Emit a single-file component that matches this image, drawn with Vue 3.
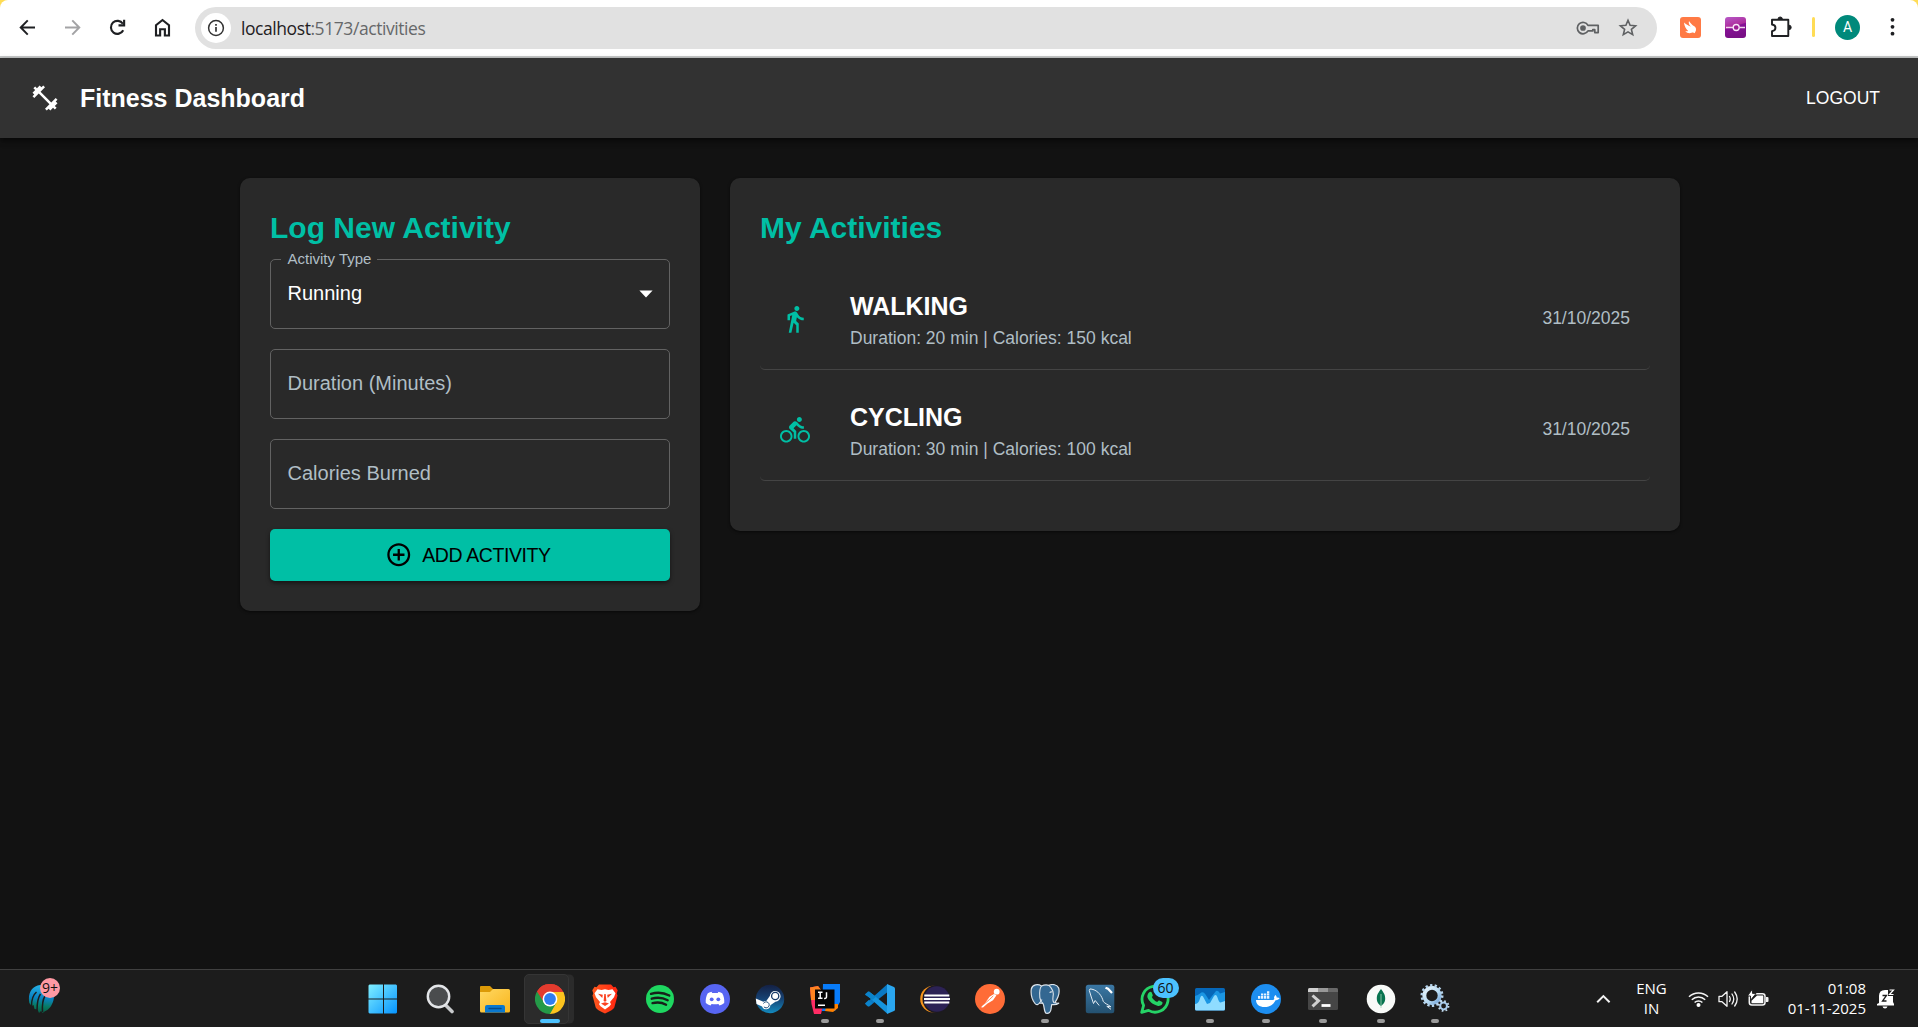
<script setup>
const activities = [
  {
    type: 'WALKING',
    detail: 'Duration: 20 min | Calories: 150 kcal',
    date: '31/10/2025',
    icon: 'M13.5 5.5c1.1 0 2-.9 2-2s-.9-2-2-2-2 .9-2 2 .9 2 2 2zM9.8 8.9 7 23h2.1l1.8-8 2.1 2v6h2v-7.5l-2.1-2 .6-3C14.8 12 16.8 13 19 13v-2c-1.9 0-3.5-1-4.3-2.4l-1-1.6c-.4-.6-1-1-1.7-1-.3 0-.5.1-.8.1L6 8.3V13h2V9.6l1.8-.7'
  },
  {
    type: 'CYCLING',
    detail: 'Duration: 30 min | Calories: 100 kcal',
    date: '31/10/2025',
    icon: 'M15.5 5.5c1.1 0 2-.9 2-2s-.9-2-2-2-2 .9-2 2 .9 2 2 2zM5 12c-2.8 0-5 2.2-5 5s2.2 5 5 5 5-2.2 5-5-2.2-5-5-5zm0 8.5c-1.9 0-3.5-1.6-3.5-3.5s1.6-3.5 3.5-3.5 3.5 1.6 3.5 3.5-1.6 3.5-3.5 3.5zm5.8-10 2.4-2.4.8.8c1.3 1.3 3 2.1 5.1 2.1V9c-1.5 0-2.7-.6-3.6-1.5l-1.9-1.9c-.5-.4-1-.6-1.6-.6s-1.1.2-1.4.6L7.8 8.4c-.4.4-.6.9-.6 1.4 0 .6.2 1.1.6 1.4L11 14v5h2v-6.2l-2.2-2.3zM19 12c-2.8 0-5 2.2-5 5s2.2 5 5 5 5-2.2 5-5-2.2-5-5-5zm0 8.5c-1.9 0-3.5-1.6-3.5-3.5s1.6-3.5 3.5-3.5 3.5 1.6 3.5 3.5-1.6 3.5-3.5 3.5z'
  }
]
</script>

<template>
  <div class="screen">
    <!-- browser toolbar -->
    <div class="chrome-wrap">
      <div class="toolbar">
        <div class="nav">
          <svg width="25" height="25" viewBox="0 0 20 20" fill="none" stroke="#1f2023" stroke-width="1.6"><path d="M16 10H4.8M10.2 4.3 4.6 10l5.6 5.7" /></svg>
          <svg width="25" height="25" viewBox="0 0 20 20" fill="none" stroke="#a3a3a5" stroke-width="1.6"><path d="M4 10h11.2M9.8 4.3l5.6 5.7-5.6 5.7" /></svg>
          <svg width="25" height="25" viewBox="0 0 20 20" fill="none" stroke="#1f2023" stroke-width="1.7"><path d="M14.6 12.2A5.2 5.2 0 1 1 14.3 7" /><path d="M15.3 3.8v4.5h-4.5" /></svg>
          <svg width="25" height="25" viewBox="0 0 20 20" fill="none" stroke="#1f2023" stroke-width="1.7"><path d="M4.8 16.4V8.2L10 4l5.2 4.2v8.2h-3.3v-5H8.1v5z" /></svg>
        </div>
        <div class="omnibox">
          <span class="site-info">
            <svg width="18" height="18" viewBox="0 0 18 18"><circle cx="9" cy="9" r="7.4" fill="none" stroke="#333" stroke-width="1.5" /><path d="M9 8v4.8M9 5v1.7" stroke="#333" stroke-width="1.7" /></svg>
          </span>
          <span class="url"><b>localhost</b>:5173/activities</span>
          <svg class="key" width="24" height="16" viewBox="0 0 24 16" fill="none" stroke="#5f6163" stroke-width="1.7"><path d="M12 5.3h10.2v7.3h-3.4V9.7h-2v1.2H12A5.7 5.7 0 1 1 12 5.3z" stroke-linejoin="round" /><circle cx="7" cy="8" r="2" fill="#5f6163" /></svg>
          <svg class="star" width="20" height="20" viewBox="0 0 20 20" fill="none" stroke="#5f6163" stroke-width="1.6"><path d="m10 2.3 2.1 5 5.5.5-4.2 3.6 1.3 5.3L10 13.9l-4.7 2.8 1.3-5.3-4.2-3.6 5.5-.5z" /></svg>
        </div>
        <div class="extensions">
          <svg width="21" height="21" viewBox="0 0 21 21"><rect width="21" height="21" rx="3" fill="#ff7a45" /><path d="M4 5.500c2.500 2.300 4.700 3.300 7 4C9 8 8.300 6 9 3.900c1.300 2.500 3.200 3.500 4.400 4.900 2 1 2.800 2.300 2.600 3.800.1 1.500-.6 2.200-1.400 3.700-.8-.9-1.900-1-3-.5-2.500.9-4.600.2-6.400-1.600 1.300.2 2.200.1 3-.3C5.800 12 4.300 9 4 5.500z" fill="#fff" /></svg>
          <svg width="21" height="21" viewBox="0 0 21 21"><defs><linearGradient id="ext" x1="0" y1="0" x2=".3" y2="1"><stop stop-color="#b75ac8" /><stop offset=".5" stop-color="#ad2c9c" /><stop offset=".55" stop-color="#861196" /><stop offset="1" stop-color="#790f86" /></linearGradient></defs><rect width="21" height="21" rx="3" fill="url(#ext)" /><path d="M1 10.500h7M14.500 10.500h5.500" stroke="#f4d5ee" stroke-width="1.300" /><circle cx="11.200" cy="10.500" r="3" fill="#9c1b93" stroke="#f9e6f7" stroke-width="1.300" /></svg>
          <svg width="22" height="22" viewBox="0 0 22 22" fill="none" stroke="#1f2023" stroke-width="1.900"><path d="M2 3.700h16.300v16.300H2v-4.800c4.600-.5 4.600-6.200 0-6.700z" stroke-linejoin="round" /><path d="M8 3.200a2.200 2.200 0 0 1 4.400 0M19 9.200a2.200 2.200 0 0 1 0 4.400" fill="#1f2023" stroke-width="1" /></svg>
        </div>
        <span class="bar"></span>
        <span class="avatar">A</span>
        <svg class="dots" width="5" height="20" viewBox="0 0 5 20" fill="#1f2023"><circle cx="2.500" cy="2.800" r="1.900" /><circle cx="2.500" cy="9.800" r="1.900" /><circle cx="2.500" cy="16.700" r="1.900" /></svg>
      </div>
    </div>

    <header class="appbar">
      <svg width="30" height="30" viewBox="0 0 24 24" fill="#fff"><path d="M20.570 14.860 22 13.430 20.570 12 17 15.570 8.430 7 12 3.430 10.570 2 9.140 3.430 7.710 2 5.570 4.140 4.140 2.710 2.710 4.140l1.430 1.430L2 7.710l1.430 1.430L2 10.570 3.430 12 7 8.430 15.570 17 12 20.570 13.430 22l1.430-1.430L16.290 22l2.140-2.140 1.430 1.430 1.430-1.430-1.430-1.430L22 16.290z" /></svg>
      <h1>Fitness Dashboard</h1>
      <button class="logout">LOGOUT</button>
    </header>

    <main class="content">
      <section class="card form">
        <h2>Log New Activity</h2>
        <div class="fields">
          <div class="field select">
            <span class="float-label">Activity Type</span>
            <span class="value">Running</span>
            <svg width="30" height="30" viewBox="0 0 24 24" fill="#fff"><path d="m6.700 10 5.300 5.500 5.300-5.500z" /></svg>
          </div>
          <div class="field">Duration (Minutes)</div>
          <div class="field">Calories Burned</div>
          <button class="add">
            <svg width="27.5" height="27.5" viewBox="0 0 24 24"><path d="M13 7h-2v4H7v2h4v4h2v-4h4v-2h-4V7zm-1-5C6.480 2 2 6.480 2 12s4.480 10 10 10 10-4.480 10-10S17.520 2 12 2zm0 18c-4.410 0-8-3.590-8-8s3.590-8 8-8 8 3.590 8 8-3.590 8-8 8z" /></svg>
            <span>ADD ACTIVITY</span>
          </button>
        </div>
      </section>

      <section class="card list">
        <h2>My Activities</h2>
        <div v-for="a in activities" :key="a.type" class="row">
          <svg width="30" height="30" viewBox="0 0 24 24" fill="#00bfa5"><path :d="a.icon" /></svg>
          <div class="info">
            <h3>{{ a.type }}</h3>
            <p>{{ a.detail }}</p>
          </div>
          <span class="date">{{ a.date }}</span>
        </div>
      </section>
    </main>

    <footer class="taskbar">
      <div class="widget">
        <svg width="28" height="30" viewBox="0 0 28 30"><defs><linearGradient id="wg" x1=".5" y1="0" x2=".4" y2="1"><stop stop-color="#27b4e8" /><stop offset=".45" stop-color="#0b83c4" /><stop offset=".75" stop-color="#077a62" /><stop offset="1" stop-color="#0a5a45" /></linearGradient></defs><path d="M1.300 19C-.5 9 4 2 12 1h8c5 3 7 9 5.500 15-1.500 6-5 10-9 11.500L14.700 29l-1.700-2-2 2-1.500-3.500-3-.5-1-4-2 1z" fill="url(#wg)" /><path d="M3.500 22C3.500 15 5 11 8.500 8M9 27c0-8 .5-13 3.500-17M14.500 28c-.5-8 0-12 2.500-16" fill="none" stroke="#1c1c1c" stroke-width="1.500" /></svg>
        <span class="badge pink">9+</span>
      </div>

      <div class="apps">
        <div class="app">
          <svg width="30" height="30" viewBox="0 0 30 30"><defs><linearGradient id="win" x1="0" y1="0" x2="1" y2="1"><stop stop-color="#80efff" /><stop offset="1" stop-color="#0593ff" /></linearGradient></defs><path d="M1.500.5H15v14H.5v-13zM16 .5h12l1 1v13H16zM.5 15.500H15v14H1.500l-1-1zM16 15.500h13v13l-1 1H16z" fill="url(#win)" /></svg>
        </div>
        <div class="app search">
          <svg width="30" height="30" viewBox="0 0 30 30"><path d="m20 20.500 7 7" stroke="#c9cbcd" stroke-width="3.600" stroke-linecap="round" /><circle cx="13.500" cy="12.500" r="10.700" fill="#4a4c4e" stroke="#e3e5e8" stroke-width="2.400" /></svg>
        </div>
        <div class="app">
          <svg width="30" height="30" viewBox="0 0 30 30"><defs><linearGradient id="fold" x1="0" y1="0" x2="1" y2="1"><stop stop-color="#ffd862" /><stop offset="1" stop-color="#f9b51c" /></linearGradient></defs><path d="M0 3q0-1 1-1h9l4 4v5H0z" fill="#dc9a07" /><path d="M0 8h10l3-3h15.500q1.500 0 1.500 1.500V27q0 1.500-1.500 1.500h-27Q0 28.500 0 27z" fill="url(#fold)" /><path d="M5 28.500V23q0-2 2-2h16q2 0 2 2v5.500z" fill="#0a78cf" /><path d="M9 24.500h12" stroke="#064b8b" stroke-width="1.400" stroke-linecap="round" /></svg>
        </div>
        <div class="app active">
          <svg width="30" height="30" viewBox="0 0 30 30"><path d="M15 15 2 7.500A15 15 0 0 1 28 7.500z" fill="#e33b2e" /><path d="M15 15 28 7.500A15 15 0 0 1 15 30z" fill="#fcc31e" /><path d="M15 8h13.200L29 10 21 18.500 15 30l-3-4z" fill="#fcc31e" /><path d="M2 7.500A15 15 0 0 0 15 30l6.200-11-6.200-3z" fill="#249a48" /><path d="M2 7.500 8.700 18 15 8h13.200A15 15 0 0 0 2 7.500z" fill="#e33b2e" /><circle cx="15" cy="15" r="7.400" fill="#fff" /><circle cx="15" cy="15" r="5.900" fill="#2f7df0" /></svg>
          <i class="dot wide"></i>
        </div>
        <div class="app">
          <svg width="30" height="30" viewBox="0 0 30 30"><defs><linearGradient id="brv"><stop stop-color="#ff5a1f" /><stop offset="1" stop-color="#ff2410" /></linearGradient></defs><path d="M9 .500h12l2.500 2.800 2-.5 2.200 3.500-1 3.200.8 2-3.200 12q-1 2.500-9.300 6-8.300-3.500-9.300-6L2.500 11.500l.8-2-1-3.200 2.200-3.500 2 .5z" fill="url(#brv)" /><path d="m7.500 5.300 4 .7 3.500-.8 3.500.8 4-.7 3 4-1.500 4-4 4.700 1 2.200-1.500 2L15 25.500l-4.500-3.300-1.500-2L10 18l-4-4.700-1.500-4z" fill="#fff" /><path d="m8 9.700 4.800 1.100-.5 3.200zM22 9.700l-4.800 1.100.5 3.200zM14.300 10h1.400l.7 7-1.400.7-1.400-.7zM11 19.500l4-1.200 4 1.200-4 2.600z" fill="#fb4120" /></svg>
        </div>
        <div class="app">
          <svg width="30" height="30" viewBox="0 0 30 30"><circle cx="15" cy="15" r="14" fill="#1ed760" /><path d="M6 9.900c6-1.800 13-1.200 18.300 1.700M6.700 14.700c5.500-1.600 11.300-1 16 1.600M7.500 19.200c4.800-1.300 9.500-.8 13.600 1.500" fill="none" stroke="#17211a" stroke-width="2.300" stroke-linecap="round" /></svg>
        </div>
        <div class="app">
          <svg width="30" height="30" viewBox="0 0 30 30"><circle cx="15" cy="15" r="15" fill="#5765f2" /><path d="m12.300 7.800-.6 1.300h6.600l-.6-1.300c1.700.2 3.200.7 4.500 1.500 1.700 2.900 2.400 6.300 2 9.700a11 11 0 0 1-4.700 2.600l-1.100-1.700c-2.400.6-4.400.6-6.800 0l-1.100 1.700A11 11 0 0 1 5.800 19c-.4-3.400.3-6.800 2-9.700 1.300-.8 2.800-1.300 4.500-1.500z" fill="#fff" /><circle cx="11.700" cy="15.300" r="1.900" fill="#5765f2" /><circle cx="18.300" cy="15.300" r="1.900" fill="#5765f2" /></svg>
        </div>
        <div class="app">
          <svg width="30" height="30" viewBox="0 0 30 30"><defs><linearGradient id="stm" x1="0" y1="0" x2="0" y2="1"><stop stop-color="#142044" /><stop offset=".5" stop-color="#164374" /><stop offset="1" stop-color="#138abe" /></linearGradient></defs><circle cx="15" cy="15" r="14.200" fill="url(#stm)" /><path d="m.8 14.500 7.600 3.200c1-.6 1.800-.7 2.900-.6l3.500-5a5.400 5.400 0 1 1 5.600 5.600l-5 3.600a4.300 4.300 0 0 1-8.300 1.200L1.500 20z" fill="#fff" /><circle cx="20.200" cy="12" r="3.600" fill="#fff" stroke="#173b69" stroke-width="1.300" /><path d="M8.500 19.500a3 3 0 1 1 .4 3.300" fill="none" stroke="#164876" stroke-width="1" /></svg>
        </div>
        <div class="app">
          <svg width="30" height="30" viewBox="0 0 30 30"><path d="M13 0h17v18l-5 9H12z" fill="#087cfa" /><path d="M17 20h11v4l-5 4-8-1z" fill="#ff8100" /><path d="M0 3.500 8 2l7 10-3 14-1 4H4L1.500 20z" fill="#ff2c64" /><path d="M0 3.500 8 2l4 5-5 9H1z" fill="#ff8320" /><rect x="5" y="5.500" width="19.500" height="19" fill="#050505" /><path d="M8 8.300h4.500M10.200 8.300v6M8 14.300h4.500M16.500 8.300v4.500q0 1.700-1.700 1.600h-.7M8 21.200h7" stroke="#fff" stroke-width="1.500" fill="none" /></svg>
          <i class="dot"></i>
        </div>
        <div class="app">
          <svg width="30" height="30" viewBox="0 0 30 30"><path d="M1 19.200 22.300.3v8L4 22.500z" fill="#0a79c4" /><path d="M1 10.600 4 7.500 22.300 22v7.700z" fill="#1594dd" /><path d="M0 10.800q0-.8 3-3.300l1 .1 7 5.200-3.500 3zM0 19.500q0 .7 3 3l1-.1 3.500-2.900-3.800-3.600z" fill="#0b83cb" /><path d="M22 0l7 3q1 .5 1 1.500v21q0 1-1 1.500l-7 3z" fill="#2aa6ef" /></svg>
          <i class="dot"></i>
        </div>
        <div class="app">
          <svg width="30" height="30" viewBox="0 0 30 30"><circle cx="13.500" cy="15" r="13.300" fill="#f7941e" /><circle cx="16.500" cy="15" r="14" fill="#1d1a22" /><circle cx="16.800" cy="15" r="12.800" fill="#2c2255" /><path d="M4.300 11.500h25M4 15h26M4.300 18.500h25" stroke="#fff" stroke-width="1.900" /></svg>
        </div>
        <div class="app">
          <svg width="30" height="30" viewBox="0 0 30 30"><circle cx="15" cy="15" r="15" fill="#ff6c37" /><circle cx="21.700" cy="7.700" r="2.900" fill="#fff" /><path d="m19 10 2.500 1.200-3.500 5-5.500 3.300-4.500 4-2-.2 4.500-4.800 4-5.800z" fill="#fff" /><path d="m8.500 20.500 6-5 3.800-3.600" stroke="#ff6c37" stroke-width=".8" fill="none" /></svg>
        </div>
        <div class="app">
          <svg width="30" height="30" viewBox="0 0 30 30"><path d="M11.500 2C8-.2 2.500.3 1.300 5c-.6 4.700 1 11 3.700 14.500 1.500 2 3.200 1.200 4.500-.5l3.500.5c1.500 2.500.8 8 3 9.700 3 .5 4.700-1 5-4l.7-4.700c2.300.3 5 .2 7-1.300-1.500.1-3-.2-3.700-.9C28 14 30 9 28.700 4 27 .4 22.500-.2 19 1.300 16.500.6 14 .8 11.500 2z" fill="#336791" stroke="#dbe3ea" stroke-width="1.200" stroke-linejoin="round" /><path d="M11.500 2c-2.300 3-2 8-1.700 11 .2 2.300 0 4 3.200 6.500M19 1.300c3.500 3.400 5 7.700 4 11.700-.3 2-.6 5 1.700 6M9.500 19l2.500-3.500M22 8c-1.500-.3-2 .2-2 1" fill="none" stroke="#dbe3ea" stroke-width="1.100" /></svg>
          <i class="dot"></i>
        </div>
        <div class="app">
          <svg width="30" height="30" viewBox="0 0 30 30"><defs><linearGradient id="sql" x1="0" y1="0" x2="0" y2="1"><stop stop-color="#3a77a4" /><stop offset="1" stop-color="#245170" /></linearGradient></defs><rect x=".8" y=".8" width="28.500" height="28.500" rx="2.500" fill="url(#sql)" /><path d="M8.500 19.500C7 15 5.500 11 4.300 6.500q0-2.500 2.700-1.300C13 6.500 17 12 18.200 17.300c1.200 2 4.300 3 7.800 5.500l-4.200-.5 4.200 3M8.500 19.500l1.700-3 4 5" fill="none" stroke="#e3ecf4" stroke-width="1" /><path d="m20.500 3.800 2.500 1 4 4.200" fill="none" stroke="#fff" stroke-width="2.300" /></svg>
        </div>
        <div class="app">
          <svg width="30" height="30" viewBox="0 0 30 30"><path d="m1.700 28.300 1.900-7A13 13 0 1 1 8.500 26.400z" fill="none" stroke="#25d366" stroke-width="2.800" stroke-linejoin="round" /><path d="M9.300 8.200c.8-.8 2-.7 2.400.2l1 2.500c.2.500 0 1-.9 2.100 1.300 2.600 3 4 5.500 5 .9-1.200 1.300-1.700 2-1.500l2.900 1.400c.6.400.3 2-.5 2.900-1 1-2.900 1.400-4.300.9-5.400-1.500-8.200-4.400-9.900-8.200-.6-1.800.4-4 1.800-5.300z" fill="#25d366" /></svg>
          <span class="badge blue">60</span>
        </div>
        <div class="app">
          <svg width="30" height="30" viewBox="0 0 30 30"><rect y="4" width="30" height="22.500" rx="1.500" fill="#0667b8" /><path d="M0 12q3-1 5-2.500Q8 6.500 10.500 10.500L14 16l3-4 4-5q2.500-1 4 2.500L30 8v17H0z" fill="#1b96e3" /><path d="M0 20q3 0 4.500-4 1.500-6 3.500-3.500l4 7.500 3-1 4-7q2-2.500 3.500 1.500 1.500 5 3 5l4.500-1.500v8q0 1.500-1.500 1.500h-27Q0 26.500 0 25z" fill="#8fdcff" /></svg>
          <i class="dot"></i>
        </div>
        <div class="app docker">
          <svg width="30" height="30" viewBox="0 0 30 30"><circle cx="15" cy="15" r="15" fill="#1d8ef0" /><path d="M5 16h17c1.300-.4 1.500-1.300 1-2.700l1.200-2.200c1.300.7 1.500 1.500 1.400 2.400 1.500-.1 2.300.1 3 .6-.7 1.600-2.100 2.200-4 2.100C22.500 20.700 18.500 23 13.500 23 8.500 23 5 20.500 5 16z" fill="#fff" /><path d="M7 12h2.300v2.700H7zM10 12h2.300v2.700H10zM13 12h2.300v2.700H13zM16 12h2.300v2.700H16zM10 9.600h2.300v2H10zM13 9.600h2.300v2H13zM16 9.600h2.300v2H16zM16 7.200h2.300v2H16z" fill="#e8f4ff" /></svg>
          <i class="dot"></i>
        </div>
        <div class="app terminal">
          <svg width="30" height="30" viewBox="0 0 30 30"><rect y="4" width="30" height="22" rx="1.500" fill="#464646" /><path d="M0 8V5.500Q0 4 1.500 4H10v4z" fill="#d0d0d0" /><path d="M10 4h10v4H10z" fill="#989898" /><path d="M20 4h8.500Q30 4 30 5.500V8H20z" fill="#686868" /><path d="m4.500 11.500 6 5.300-6 5.500" fill="none" stroke="#d0d0d0" stroke-width="3" /><path d="M13.500 21.500h9" stroke="#fff" stroke-width="2.800" /></svg>
          <i class="dot"></i>
        </div>
        <div class="app mongo">
          <svg width="30" height="30" viewBox="0 0 30 30"><circle cx="15" cy="15" r="14.300" fill="#f8faf8" /><path d="M15 5c2 3 4.200 5 4.200 9.500 0 4-2.200 6-4.200 7.500-2-1.500-4.200-3.500-4.200-7.500C10.800 10 13 8 15 5z" fill="#07734f" /><path d="M15 10v14" stroke="#a5d4ba" stroke-width=".8" /></svg>
          <i class="dot"></i>
        </div>
        <div class="app gears">
          <svg width="30" height="30" viewBox="0 0 30 30"><defs><linearGradient id="gr" x1="0" y1="0" x2="1" y2="1"><stop stop-color="#e9f4fb" /><stop offset=".6" stop-color="#b5d9f2" /><stop offset="1" stop-color="#6d9fd6" /></linearGradient></defs><circle cx="12" cy="11.500" r="7.700" fill="none" stroke="url(#gr)" stroke-width="4" /><circle cx="12" cy="11.500" r="10.200" fill="none" stroke="#b6d4ec" stroke-width="2.600" stroke-dasharray="2.300 2.280" /><circle cx="23.600" cy="22" r="3.400" fill="none" stroke="#a9cdee" stroke-width="2" /><circle cx="23.600" cy="22" r="4.900" fill="none" stroke="#c3dcf0" stroke-width="1.800" stroke-dasharray="1.700 2.150" /></svg>
          <i class="dot"></i>
        </div>
      </div>

      <div class="tray">
        <svg class="chev" width="15" height="10" viewBox="0 0 15 10" fill="none" stroke="#f2f2f2" stroke-width="2"><path d="m1.200 8.300 6.200-6.200 6.200 6.200" /></svg>
        <div class="lang"><span>ENG</span><span>IN</span></div>
        <svg class="wifi" width="21" height="18" viewBox="0 0 21 18" fill="none" stroke="#f4f4f4" stroke-width="1.500"><path d="M1 6.800a13.500 13.500 0 0 1 19 0M3.800 9.700a9.500 9.500 0 0 1 13.400 0M6.600 12.500a5.500 5.500 0 0 1 7.800 0" /><circle cx="10.500" cy="15" r="2" fill="#fff" stroke="none" /></svg>
        <svg class="vol" width="21" height="18" viewBox="0 0 21 18" fill="none" stroke="#f4f4f4" stroke-width="1.300"><path d="M1 6.300h3l5-4.600v14.600l-5-4.600H1z" stroke-linejoin="round" /><path d="M11.500 6.500q1.500 2.500 0 5M14 4q3.500 5 0 10M16.700 2q5 7 0 14" stroke-linecap="round" /></svg>
        <svg class="bat" width="21" height="20" viewBox="0 0 21 20"><rect x="1.300" y="4.800" width="15.700" height="11.200" rx="2.500" fill="none" stroke="#f4f4f4" stroke-width="1.500" /><path d="M18 8h1.500q1 0 1 1v3q0 1-1 1H18z" fill="#f4f4f4" /><path d="M9 6.500h6.300v7.800H3.500v-2.500z" fill="#fff" /><path d="M4.500 0v4.500H8L2.500 11.300V7H-.5z" fill="#fff" stroke="#1c1c1c" stroke-width=".9" /></svg>
        <div class="clock"><span>01:08</span><span>01-11-2025</span></div>
        <svg class="bell" width="18" height="20" viewBox="0 0 18 20"><path d="M2 14V7q0-6 6-6h3v6h5v6l1 2v1.500H0V15zM5.500 17.500h5q-.5 2-2.500 2t-2.500-2z" fill="#fff" /><path d="M5.500 6.500h4L5.500 12h4" fill="none" stroke="#1c1c1c" stroke-width="1.300" /><path d="M12.500 1h4l-4 4.500h4" fill="none" stroke="#fff" stroke-width="1.200" /></svg>
      </div>
    </footer>
  </div>
</template>

<style>
body {
  background: #121212;
}
</style>

<style scoped>
.screen {
  display: flex;
  flex-direction: column;
  height: 1027px;
  overflow: hidden;
  background: #121212;
  color: #fff;
  font-family: "Liberation Sans", Arial, sans-serif;
}
h1, h2, h3, p {
  margin: 0;
}
button {
  border: 0;
  font-family: inherit;
}
svg {
  display: block;
  flex: none;
}

/* browser toolbar */
.chrome-wrap {
  flex: none;
  background: #ffdc55;
}
.toolbar {
  box-sizing: border-box;
  display: flex;
  align-items: center;
  height: 58px;
  padding: 0 23px 2px 15px;
  background: #fff;
  border-bottom: 2px solid #c8caca;
  border-radius: 8px 8px 0 0;
}
.nav {
  display: flex;
  gap: 20px;
}
.omnibox {
  box-sizing: border-box;
  display: flex;
  align-items: center;
  width: 1462px;
  height: 42px;
  margin: 1px 0 0 20px;
  padding: 0 19px 0 6px;
  border-radius: 21px;
  background: #e1e1e1;
}
.site-info {
  display: flex;
  align-items: center;
  justify-content: center;
  width: 30px;
  height: 30px;
  border-radius: 50%;
  background: #fff;
}
.url {
  margin-left: 10px;
  color: #66686a;
  font: 17.5px/24px "Open Sans", "Noto Sans", sans-serif;
  letter-spacing: -0.43px;
}
.url b {
  color: #1f2023;
  font-weight: 400;
}
.key {
  margin-left: auto;
}
.star {
  margin-left: 18px;
}
.extensions {
  display: flex;
  align-items: center;
  gap: 24px;
  margin-left: 23px;
}
.bar {
  width: 3px;
  height: 20px;
  margin-left: 20px;
  border-radius: 2px;
  background: #ffdc55;
}
.avatar {
  width: 25px;
  height: 25px;
  margin-left: 20px;
  border-radius: 50%;
  background: #00897b;
  font: 14px/25px Roboto, sans-serif;
  text-align: center;
}
.dots {
  margin-left: auto;
}

/* application bar */
.appbar {
  box-sizing: border-box;
  display: flex;
  flex: none;
  align-items: center;
  height: 80px;
  padding: 0 38px 0 30px;
  background: #323232;
  box-shadow: 0 2px 5px rgba(0, 0, 0, 0.5), 0 5px 6px rgba(0, 0, 0, 0.14);
}
h1 {
  margin-left: 20px;
  font-size: 25px;
  line-height: 40px;
}
.logout {
  margin-left: auto;
  padding: 0;
  background: none;
  color: #fff;
  font-size: 17.5px;
  line-height: 30px;
}

/* cards */
.content {
  display: flex;
  flex: 1;
  align-items: flex-start;
  gap: 30px;
  padding: 40px 238px 0 240px;
}
.card {
  box-sizing: border-box;
  padding: 30px;
  border-radius: 10px;
  background: #292929;
  box-shadow: 0 1px 3px rgba(0, 0, 0, 0.6);
}
.form {
  width: 460px;
  height: 433px;
}
.list {
  width: 950px;
  height: 353px;
}
h2 {
  margin-bottom: 12px;
  color: #00bfa5;
  font-size: 30px;
  line-height: 39px;
}
.fields {
  display: flex;
  flex-direction: column;
  gap: 20px;
}
.field {
  position: relative;
  box-sizing: border-box;
  height: 70px;
  padding: 18px 17px 0 16.5px;
  border: 1px solid #626262;
  border-radius: 5px;
  color: #b0bec5;
  font-size: 20px;
  line-height: 30px;
}
.select {
  display: flex;
  align-items: flex-start;
  justify-content: space-between;
  padding-right: 8px;
}
.value {
  color: #fff;
}
.float-label {
  position: absolute;
  top: -12px;
  left: 10px;
  padding: 0 6px 0 6.5px;
  background: #292929;
  font-size: 15px;
  line-height: 22px;
}
.add {
  display: flex;
  align-items: center;
  justify-content: center;
  height: 52px;
  padding: 0 4px 0 0;
  border-radius: 5px;
  background: #00bfa5;
  color: #000;
  font-size: 19.500px;
  letter-spacing: -0.4px;
  box-shadow: 0 2px 4px rgba(0, 0, 0, 0.5);
}
.add span {
  margin-left: 9.5px;
}
.row {
  box-sizing: border-box;
  display: flex;
  align-items: center;
  height: 111px;
  padding: 9px 20px 0;
  border-bottom: 1px solid #444;
  border-radius: 5px;
}
.info {
  flex: 1;
  margin-left: 40px;
}
h3 {
  font-size: 25px;
  line-height: 40px;
}
.info p {
  color: #b0bec5;
  font-size: 17.5px;
  line-height: 25px;
}
.date {
  color: #b0bec5;
  font-size: 17.5px;
  line-height: 25px;
}

/* taskbar */
.taskbar {
  box-sizing: border-box;
  display: flex;
  flex: none;
  height: 58px;
  border-top: 1px solid #404040;
  background: #1c1c1c;
  font-family: "Open Sans", "Noto Sans", sans-serif;
}
.widget {
  position: relative;
  width: 327px;
  padding: 14px 0 0 28px;
}
.badge {
  position: absolute;
  height: 20px;
  border-radius: 10px;
  color: #111;
  font-size: 14px;
  line-height: 20px;
  text-align: center;
}
.pink {
  top: 8px;
  left: 40px;
  width: 20px;
  background: #ff99a4;
}
.blue {
  top: 8px;
  left: 25.5px;
  width: 26px;
  background: #4cc2ff;
}
.apps {
  display: flex;
}
.app {
  position: relative;
  display: flex;
  justify-content: center;
  width: 55px;
  height: 57px;
  padding-top: 14px;
  box-sizing: border-box;
}
.app svg {
  position: relative;
}
.search,
.terminal {
  margin-left: 2px;
}
.docker {
  margin-left: 1px;
}
.mongo {
  margin-left: 3px;
}
.gears {
  margin-left: -1px;
}
.active::before {
  content: "";
  position: absolute;
  top: 4px;
  left: 2px;
  width: 43px;
  height: 48px;
  border: 1px solid #353535;
  border-radius: 5px;
  background: #2b2b2b;
  box-shadow: 5.500px 0 0 -0.5px #2b2b2b;
}
.dot {
  position: absolute;
  bottom: 4px;
  left: 23.5px;
  width: 8px;
  height: 4px;
  border-radius: 2px;
  background: #9a9a9a;
}
.dot.wide {
  left: 17.500px;
  width: 20px;
  background: #4cc2ff;
}
.tray {
  display: flex;
  align-items: center;
  margin-left: auto;
  padding-right: 23px;
  font-size: 15px;
  line-height: 20px;
}
.chev {
  margin-right: 1px;
}
.lang {
  display: flex;
  flex-direction: column;
  align-items: center;
  width: 34px;
  margin: -2px 0 0 23px;
}
.wifi {
  margin-left: 19.5px;
}
.vol {
  margin-left: 9px;
}
.bat {
  margin-left: 9px;
}
.clock {
  display: flex;
  flex-direction: column;
  align-items: flex-end;
  width: 86px;
  margin: -2px 0 0 11px;
}
.bell {
  margin-left: 11px;
}
</style>
